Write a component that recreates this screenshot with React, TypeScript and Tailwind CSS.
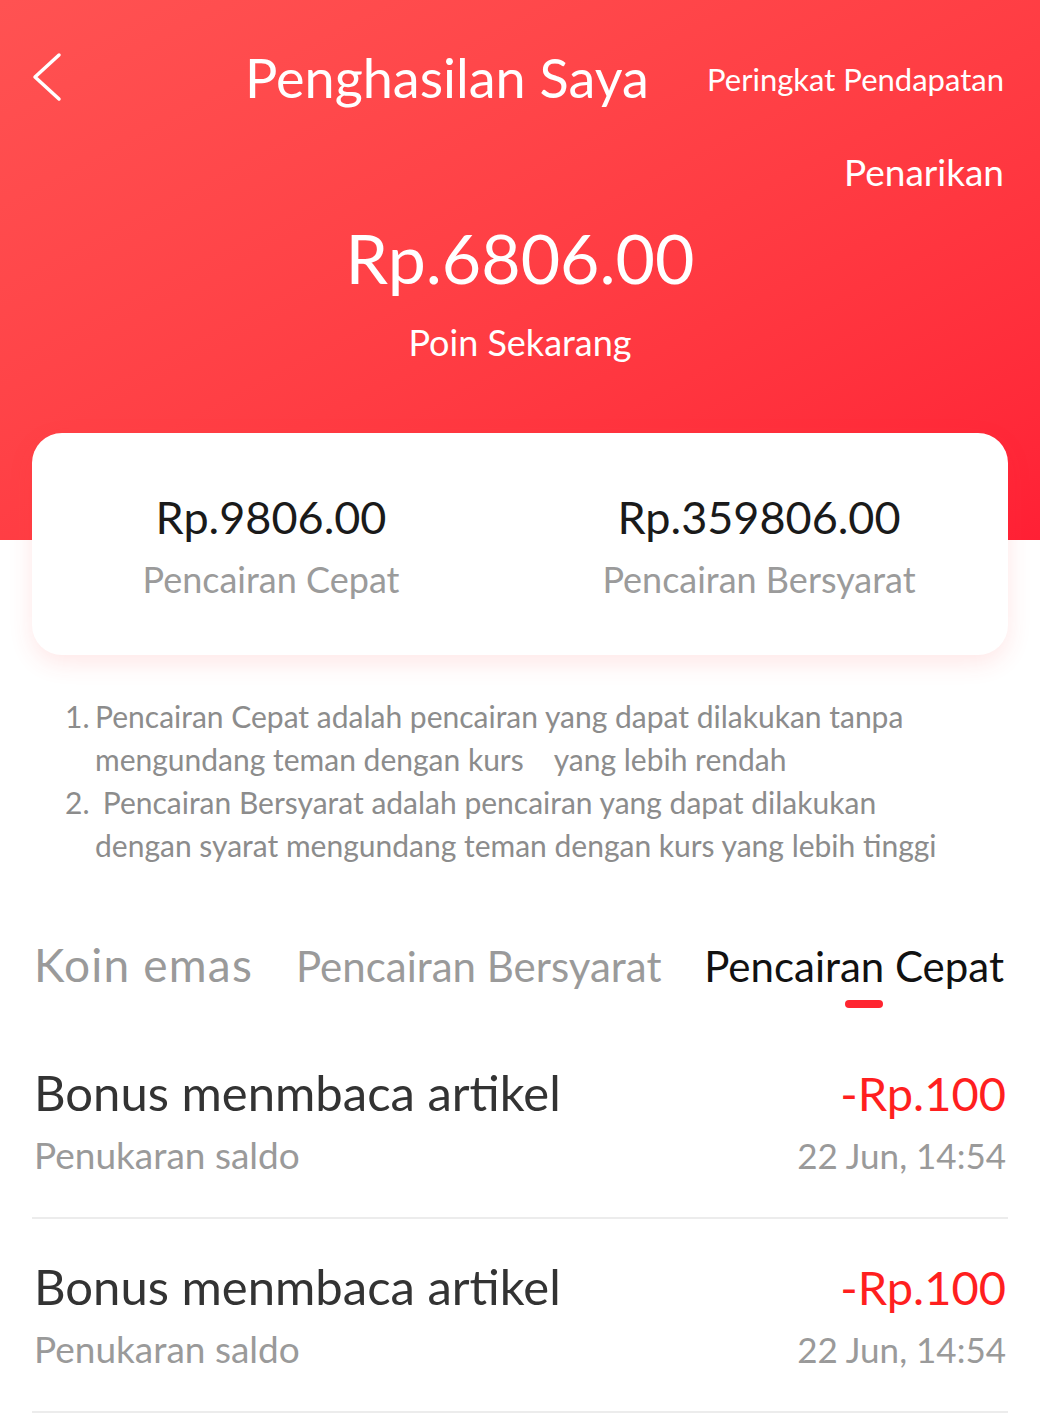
const records = [
  { title: "Bonus menmbaca artikel", sub: "Penukaran saldo", amount: "-Rp.100", time: "22 Jun, 14:54" },
  { title: "Bonus menmbaca artikel", sub: "Penukaran saldo", amount: "-Rp.100", time: "22 Jun, 14:54" },
];

export default function App() {
  return (
    <div className="w-[1040px] min-h-[1416px] bg-white font-['Lato',sans-serif] overflow-hidden whitespace-nowrap">
      {/* Red header */}
      <header className="h-[540px] bg-gradient-to-br from-[#ff5252] to-[#ff2035] text-white">
        <div className="flex items-start pt-[46px] pl-[31px] pr-[36px]">
          <svg width="32" height="50" viewBox="0 0 32 50" fill="none" className="mt-[6px]">
            <path d="M28 3 L4 25 L28 47" stroke="white" strokeWidth="3.5" strokeLinecap="round" strokeLinejoin="round" />
          </svg>
          <h1 className="ml-[182px] text-[54px] leading-[64px]">Penghasilan Saya</h1>
          <button className="ml-auto mt-[14px] text-[31px] leading-[38px]">Peringkat Pendapatan</button>
        </div>
        <div className="flex justify-end pr-[36px] mt-[40px]">
          <button className="text-[37px] leading-[44px]">Penarikan</button>
        </div>
        <div className="flex flex-col items-center mt-[24px]">
          <div className="text-[68px] leading-[80px]">Rp.6806.00</div>
          <div className="text-[36px] leading-[44px] mt-[22px]">Poin Sekarang</div>
        </div>
      </header>

      {/* Balance card */}
      <div className="relative -mt-[107px] mx-[32px] h-[222px] bg-white rounded-[30px] shadow-[0_8px_24px_rgba(255,60,60,0.12)] grid grid-cols-2">
        <div className="flex flex-col items-center pt-[56px] pr-[10px]">
          <div className="text-[45px] leading-[56px] text-[#1a1a1a]">Rp.9806.00</div>
          <div className="text-[36px] leading-[44px] text-[#9b9b9b] mt-[12px]">Pencairan Cepat</div>
        </div>
        <div className="flex flex-col items-center pt-[56px] pr-[10px]">
          <div className="text-[45px] leading-[56px] text-[#1a1a1a]">Rp.359806.00</div>
          <div className="text-[36px] leading-[44px] text-[#9b9b9b] mt-[12px]">Pencairan Bersyarat</div>
        </div>
      </div>

      {/* Notes */}
      <div className="mt-[40px] pl-[65px] text-[30px] leading-[43px] text-[#8c8c8c]">
        <div className="flex">
          <span className="w-[30px] shrink-0">1.</span>
          <span>
            Pencairan Cepat adalah pencairan yang dapat dilakukan tanpa
            <br />
            mengundang teman dengan kurs&nbsp;&nbsp;&nbsp; yang lebih rendah
          </span>
        </div>
        <div className="flex">
          <span className="w-[30px] shrink-0">2.</span>
          <span>
            &nbsp;Pencairan Bersyarat adalah pencairan yang dapat dilakukan
            <br />
            dengan syarat mengundang teman dengan kurs yang lebih tinggi
          </span>
        </div>
      </div>

      {/* Tabs */}
      <div className="mt-[72px] flex items-baseline pl-[34px] pr-[36px] text-[42px] leading-[52px]">
        <button className="text-[#9a9a9a] text-[46px] tracking-[1.2px]">Koin emas</button>
        <button className="ml-[43px] text-[#9a9a9a]">Pencairan Bersyarat</button>
        <button className="ml-auto flex flex-col items-center text-[#111]">
          Pencairan Cepat
          <span className="mt-[8px] ml-[20px] w-[38px] h-[8px] rounded-full bg-[#ff2530]" />
        </button>
      </div>

      {/* Records */}
      <div className="mx-[32px] mt-[54px]">
        {records.map((r, i) => (
          <div key={i} className="border-b-2 border-[#ececec] pb-[40px] pt-[37px] first:pt-0">
            <div className="flex justify-between items-baseline px-[2px]">
              <div className="text-[49px] leading-[60px] text-[#333]">{r.title}</div>
              <div className="text-[47px] leading-[60px] text-[#ff1f1f]">{r.amount}</div>
            </div>
            <div className="flex justify-between mt-[10px] px-[2px] text-[36px] leading-[44px] text-[#9a9a9a]">
              <span className="text-[37px]">{r.sub}</span>
              <span className="text-[35px]">{r.time}</span>
            </div>
          </div>
        ))}
      </div>
    </div>
  );
}
